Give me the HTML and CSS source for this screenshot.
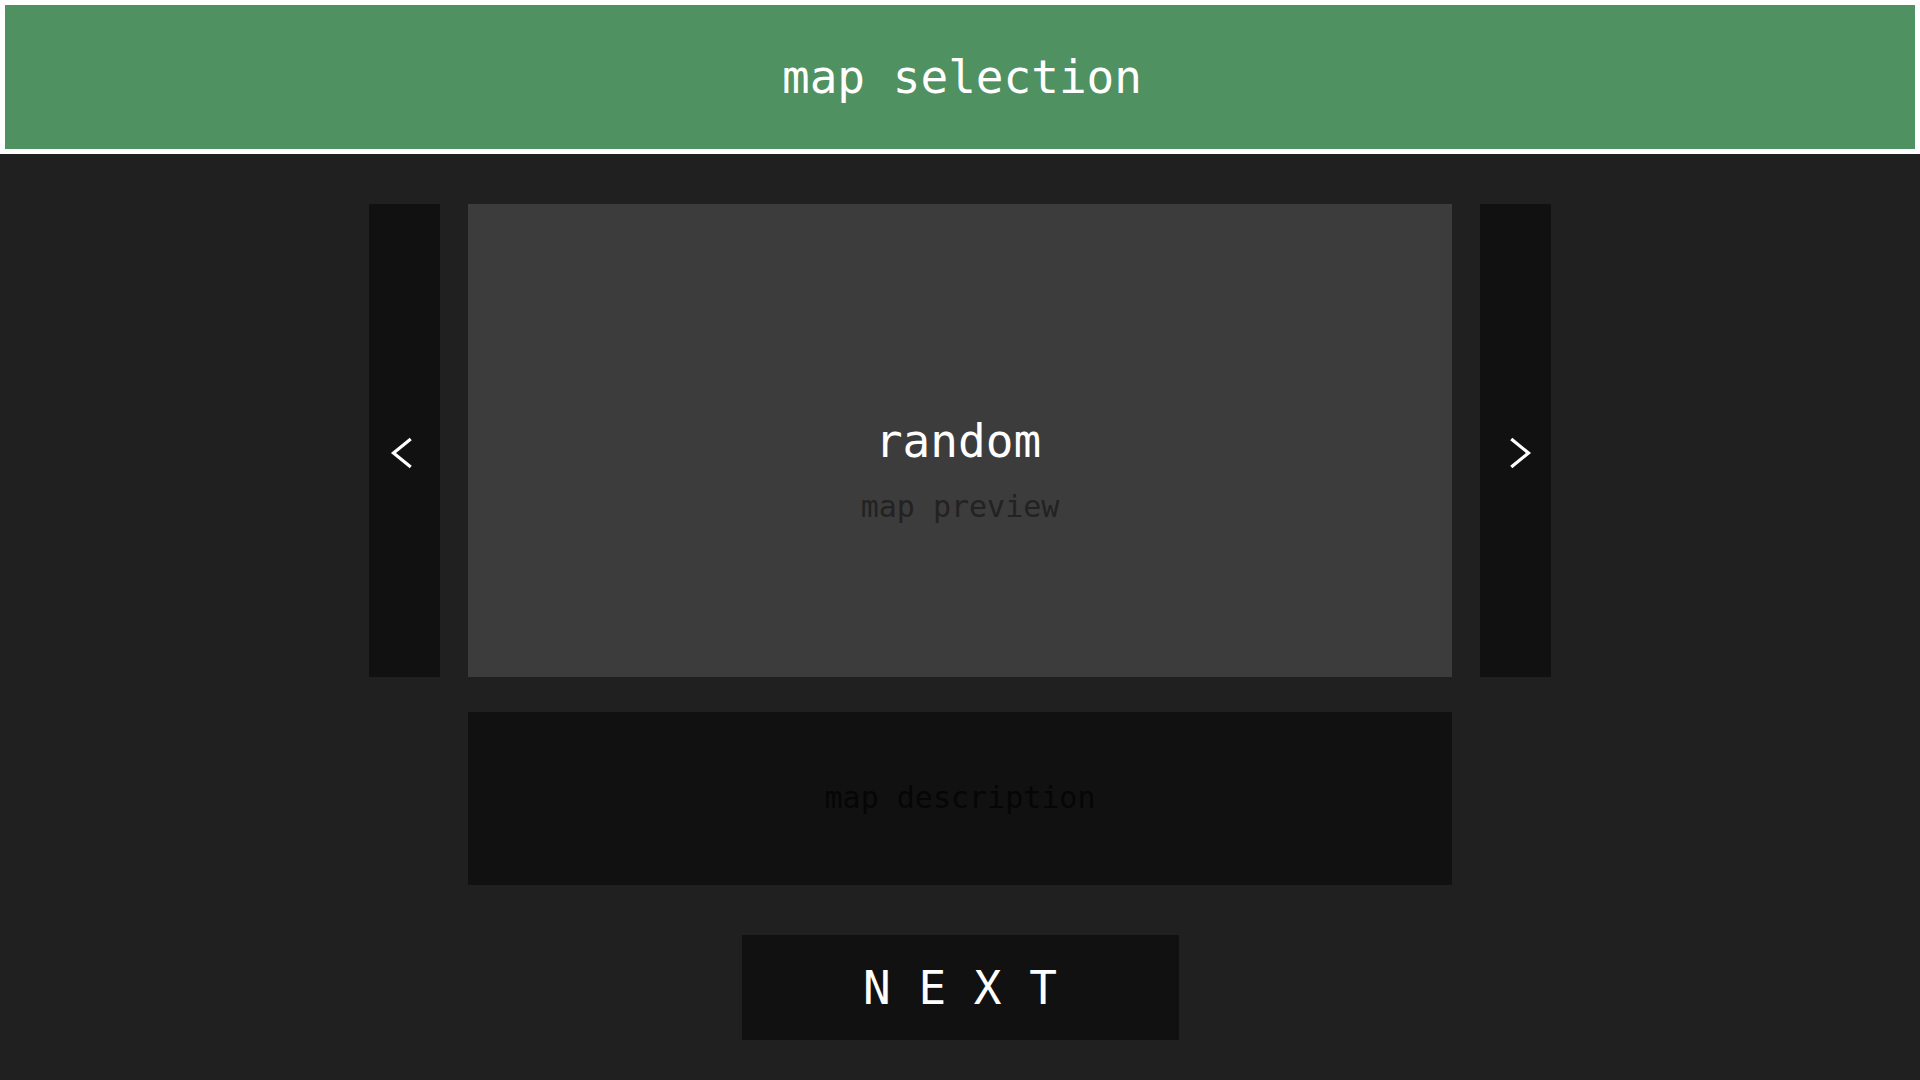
FILE: index.html
```html
<!DOCTYPE html>
<html>
<head>
<meta charset="utf-8">
<title>map selection</title>
<link rel="stylesheet" href="styles.css">
</head>
<body>
<header class="topbar"><h1 class="title">map selection</h1></header>
<main class="stage">
  <div class="carousel">
    <button class="nav nav-prev" aria-label="previous">
      <svg class="chev chev-left" width="24" height="32" viewBox="0 0 24 32"><polyline points="19.5,3 3.5,16 19.5,29" fill="none" stroke="#fff" stroke-width="3.2" stroke-linecap="square"/></svg>
    </button>
    <div class="preview">
      <div class="map-name">random</div>
      <div class="map-preview">map preview</div>
    </div>
    <button class="nav nav-next" aria-label="next">
      <svg class="chev chev-right" width="24" height="32" viewBox="0 0 24 32"><polyline points="4.5,3 20.5,16 4.5,29" fill="none" stroke="#fff" stroke-width="3.2" stroke-linecap="square"/></svg>
    </button>
  </div>
  <div class="description">map description</div>
  <button class="next-btn">N E X T</button>
</main>
</body>
</html>
```
FILE: styles.css
```css
html, body {
  margin: 0;
  padding: 0;
}
body {
  background: #202020;
  font-family: "DejaVu Sans Mono", "Liberation Mono", monospace;
  width: 1920px;
  height: 1080px;
  overflow: hidden;
}
.topbar {
  box-sizing: border-box;
  height: 154px;
  border: 5px solid #ffffff;
  background: #4f9160;
  display: flex;
  align-items: center;
  justify-content: center;
}
.title {
  margin: 0 0 0 4px;
  font-size: 46px;
  font-weight: normal;
  color: #ffffff;
}
.stage {
  display: flex;
  flex-direction: column;
  align-items: center;
  padding-top: 50px;
}
.carousel {
  display: flex;
  gap: 28px;
  height: 473px;
}
.nav {
  width: 71px;
  height: 473px;
  border: 0;
  padding: 0;
  margin: 0;
  background: #111111;
  display: flex;
  align-items: center;
  justify-content: center;
}
.chev {
  display: block;
  margin-top: 24px;
}
.chev-left { margin-right: 6px; }
.chev-right { margin-left: 8px; }
.preview {
  width: 984px;
  background: #3c3c3c;
  display: flex;
  flex-direction: column;
  align-items: center;
  justify-content: center;
  box-sizing: border-box;
  padding-top: 57px;
}
.map-name {
  font-size: 46px;
  color: #ffffff;
  margin-bottom: 21px;
  margin-right: 4px;
}
.map-preview {
  font-size: 30px;
  color: #222222;
}
.description {
  margin-top: 35px;
  width: 984px;
  height: 173px;
  box-sizing: border-box;
  padding-bottom: 3px;
  background: #111111;
  display: flex;
  align-items: center;
  justify-content: center;
  font-size: 30px;
  color: #060606;
}
.next-btn {
  margin-top: 50px;
  width: 437px;
  height: 105px;
  border: 0;
  padding: 0;
  background: #111111;
  color: #ffffff;
  font-family: "DejaVu Sans Mono", "Liberation Mono", monospace;
  font-size: 46px;
  white-space: pre;
}
```
